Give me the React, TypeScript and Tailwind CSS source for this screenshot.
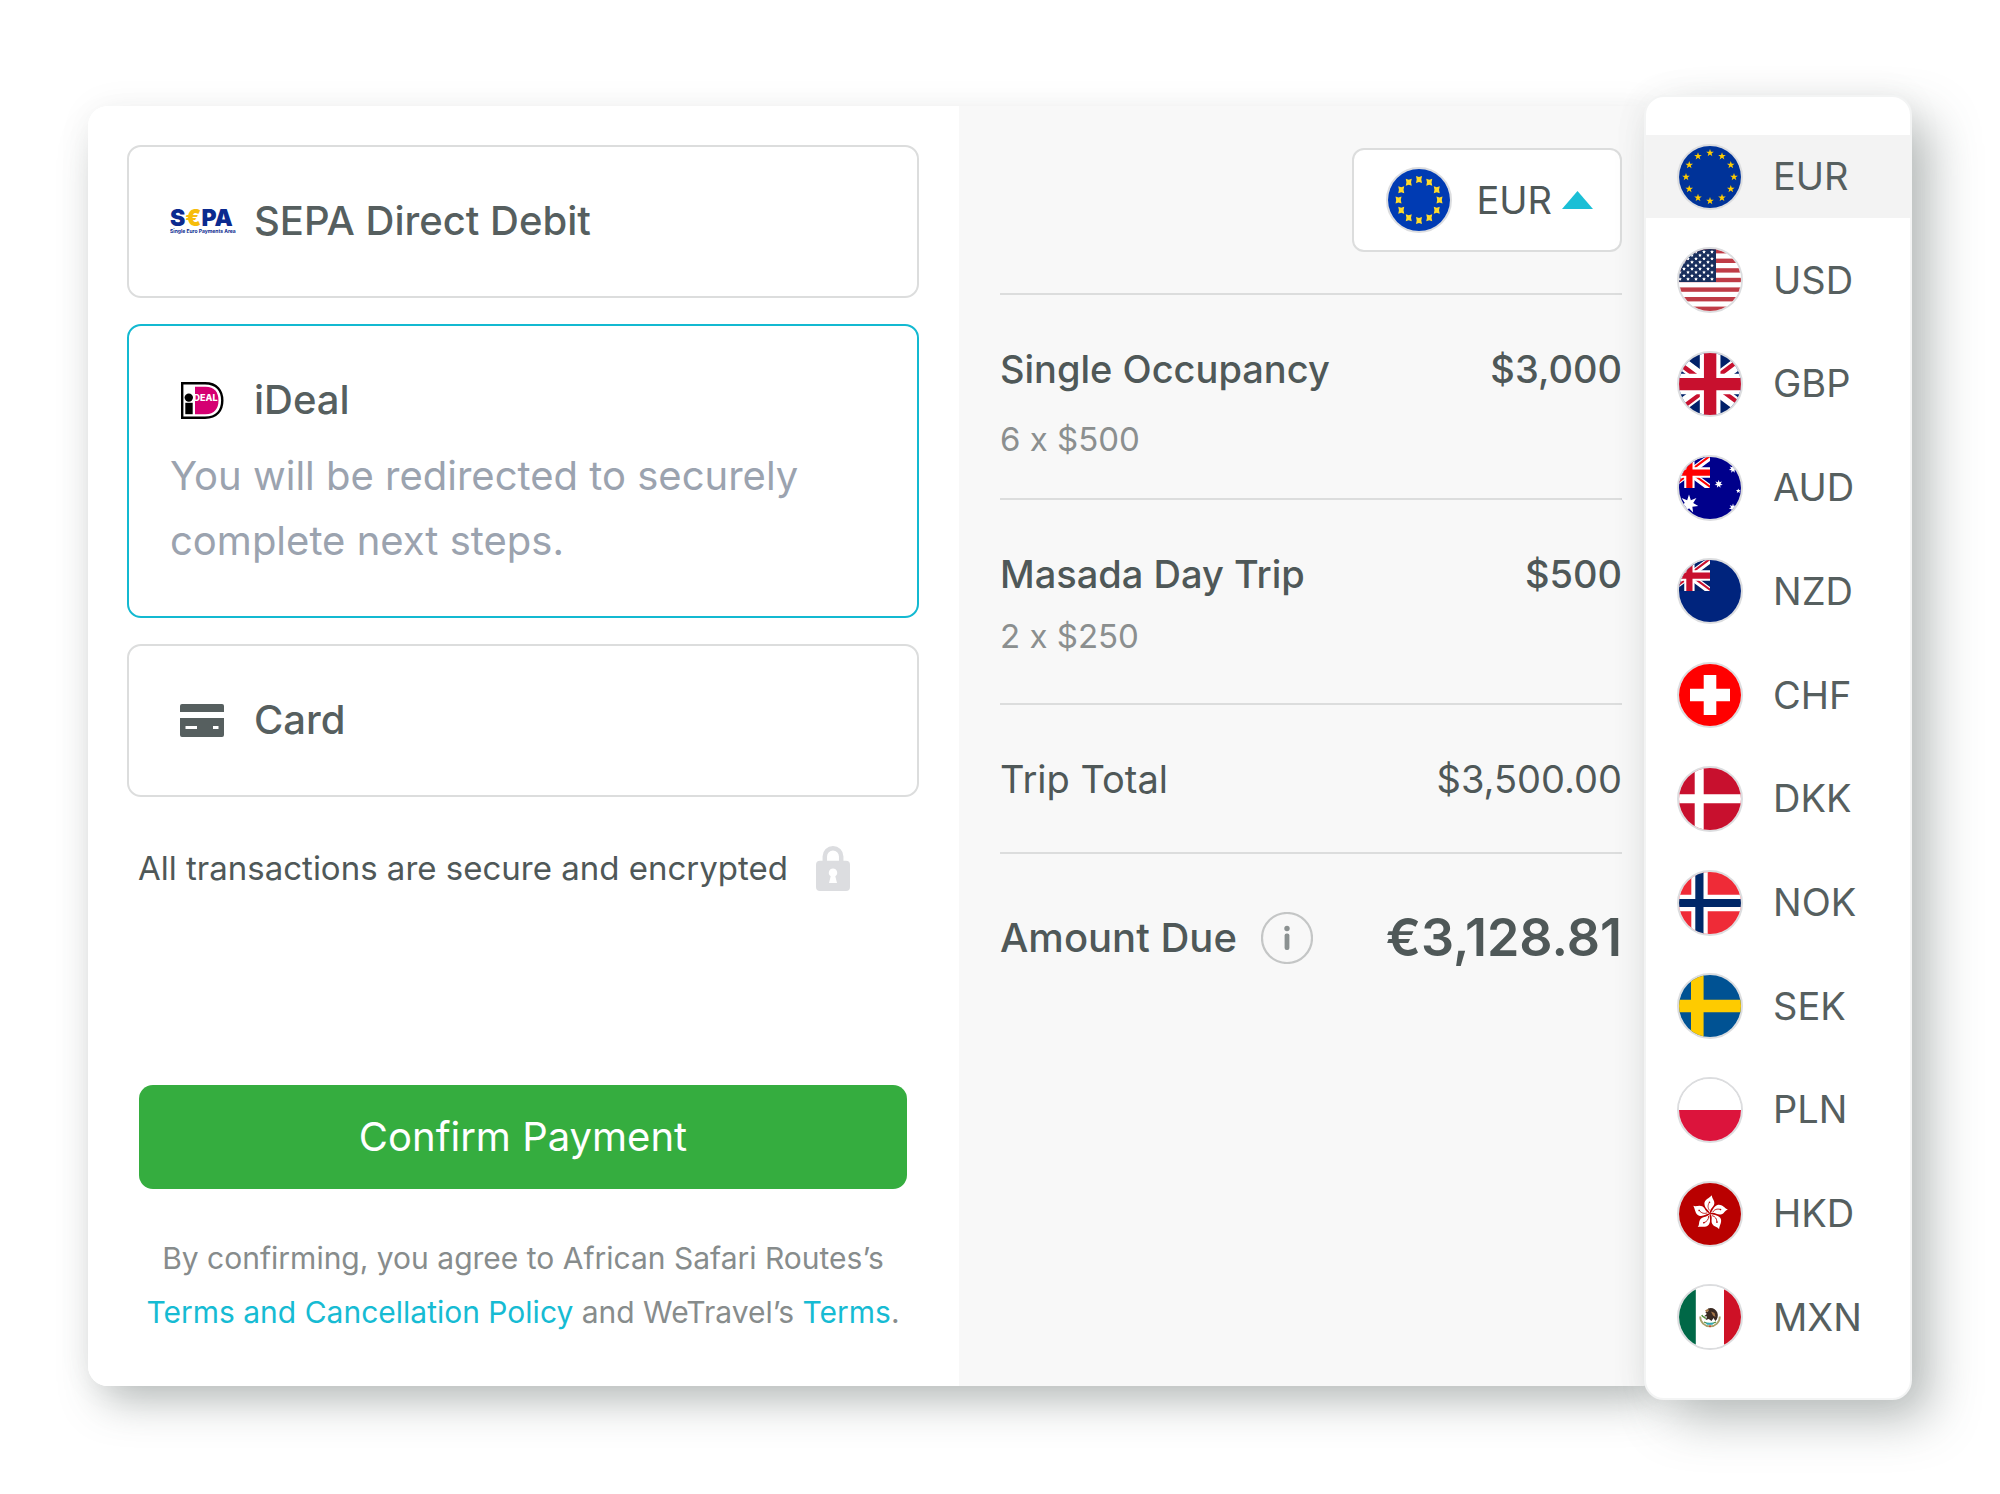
import {useState} from "react";
import type {ReactNode} from "react";

const starPoints = (cx: number, cy: number, outer: number, inner: number, tips: number) =>
    Array.from({length: tips * 2}, (_, i) => {
        const r = i % 2 === 0 ? outer : inner;
        const a = (Math.PI * i) / tips - Math.PI / 2;
        return `${(cx + r * Math.cos(a)).toFixed(2)},${(cy + r * Math.sin(a)).toFixed(2)}`;
    }).join(" ");

const ring = (radius: number) =>
    Array.from({length: 12}, (_, i) => {
        const a = (Math.PI * i) / 6;
        return {x: 31 + radius * Math.sin(a), y: 31 - radius * Math.cos(a)};
    });

const EuFlag = () => (
    <>
        <path fill="#003399" d="M0 0h62v62H0z"/>
        {ring(24).map(({x, y}, i) => (
            <polygon key={i} fill="#ffcc00" points={starPoints(x, y, 4, 1.6, 5)}/>
        ))}
    </>
);

const EuFlagCompact = () => (
    <>
        <path fill="#003bb3" d="M0 0h62v62H0z"/>
        {ring(20.5).map(({x, y}, i) => (
            <path
                key={i}
                fill="#ffda2c"
                transform={`translate(${x} ${y})`}
                d="M-3-3.4L0-2.4 3-3.4 2.300 0 3 3.400 0 2.600-3 3.400-2.300 0z"
            />
        ))}
    </>
);

const UsFlag = () => (
    <>
        <path fill="#fff" d="M0 0h62v62H0z"/>
        {[0, 2, 4, 6, 8, 10, 12].map((row) => (
            <rect key={row} fill="#bf3c46" x="0" y={row * 4.8} width="62" height="4.4"/>
        ))}
        <path fill="#192f5d" d="M0 0h37v33H0z"/>
        {Array.from({length: 9}, (_, row) =>
            (row % 2 === 0 ? [1, 9, 17, 25, 33] : [5, 13, 21, 29]).map((x) => (
                <polygon key={`${row}-${x}`} fill="#fff" points={starPoints(x, 2.9 + row * 3.4, 1.9, 1, 5)}/>
            ))
        )}
    </>
);

const GbFlag = () => (
    <g transform="translate(-10.33 0) scale(.12917)">
        <path fill="#012169" d="M0 0h640v480H0z"/>
        <path fill="#fff" d="m75 0 244 181L562 0h78v62L400 241l240 178v61h-80L320 301 81 480H0v-60l239-178L0 64V0z"/>
        <path fill="#c8102e" d="m424 281 216 159v40L369 281zm-184 20 6 35L54 480H0zM640 0v3L391 191l2-44L590 0zM0 0l239 176h-60L0 42z"/>
        <path fill="#fff" d="M241 0v480h160V0zM0 160v160h640V160z"/>
        <path fill="#c8102e" d="M0 193v96h640v-96zM273 0v480h96V0z"/>
    </g>
);

const Canton = ({blue, red}: {blue: string; red: string}) => (
    <g transform="translate(-10.33 0) scale(.12917)">
        <path fill={blue} d="M0 0h320v240H0z"/>
        <path fill="#fff" d="m37.5 0 122 90.5L281 0h39v31l-120 89.5 120 89V240h-40l-120-89.5L40.5 240H0v-30l119.5-89L0 32V0z"/>
        <path fill={red} d="M212 140.5 320 220v20l-135.5-99.5zm-92 10 3 17.5-96 72H0zM320 0v1.5l-124.5 94 1-22L295 0zM0 0l119.5 88h-30L0 21z"/>
        <path fill="#fff" d="M120.5 0v240h80V0zM0 80v80h320V80z"/>
        <path fill={red} d="M0 96.5v48h320v-48zM136.5 0v240h48V0z"/>
    </g>
);

const AuFlag = () => (
    <>
        <path fill="#00008b" d="M0 0h62v62H0z"/>
        <Canton blue="#00008b" red="#ff0000"/>
        <polygon fill="#fff" points={starPoints(10, 47, 9.5, 4.3, 7)}/>
        <polygon fill="#fff" points={starPoints(39.7, 27, 4.2, 1.9, 7)}/>
        <polygon fill="#fff" points={starPoints(54, 12, 4.2, 1.9, 7)}/>
        <polygon fill="#fff" points={starPoints(59.3, 34, 2.5, 1.1, 5)}/>
        <polygon fill="#fff" points={starPoints(54, 50.7, 4.2, 1.9, 7)}/>
    </>
);

const NzFlag = () => (
    <>
        <path fill="#00247d" d="M0 0h62v62H0z"/>
        <Canton blue="#012169" red="#c8102e"/>
    </>
);

const ChFlag = () => (
    <>
        <path fill="#ff0000" d="M0 0h62v62H0z"/>
        <path fill="#fff" d="M24.7 11h12.6v13.7H51v12.6H37.3V51H24.7V37.3H11V24.7h13.7z"/>
    </>
);

const DkFlag = () => (
    <>
        <path fill="#c8102e" d="M0 0h62v62H0z"/>
        <path fill="#fff" d="M15.7 0h9v62h-9zM0 26.3h62v9H0z"/>
    </>
);

const NoFlag = () => (
    <>
        <path fill="#ef2b37" d="M0 0h62v62H0z"/>
        <path fill="#fff" d="M12.3 0h16.4v62H12.3zM0 22.8h62v16.4H0z"/>
        <path fill="#002868" d="M16.3 0h8.2v62h-8.2zM0 26.9h62v8.2H0z"/>
    </>
);

const SeFlag = () => (
    <>
        <path fill="#005293" d="M0 0h62v62H0z"/>
        <path fill="#fecb00" d="M12 0h12.6v62H12zM0 24.7h62v12.6H0z"/>
    </>
);

const PlFlag = () => (
    <>
        <path fill="#fff" d="M0 0h62v31H0z"/>
        <path fill="#dc143c" d="M0 31h62v31H0z"/>
    </>
);

const HkFlag = () => (
    <>
        <path fill="#b90000" d="M0 0h62v62H0z"/>
        {[0, 72, 144, 216, 288].map((angle) => (
            <g key={angle} transform={`translate(31 30.4) rotate(${angle})`}>
                <path fill="#fff" d="M0-.4C-1.200-3.400-5.400-5-5.600-9.600-5.500-14-1-15 2-18.200 1.400-15.200 4.900-13.400 4.300-9.600 3.800-6.200-.4-4.800 0-.4z"/>
                <path fill="none" stroke="#b90000" strokeWidth=".8" d="M-.4-3C-2.600-5.600-2.200-8.600-.6-11"/>
                <circle cx="-.5" cy="-11.200" r=".8" fill="#b90000"/>
            </g>
        ))}
    </>
);

const MxFlag = () => (
    <>
        <path fill="#fff" d="M0 0h62v62H0z"/>
        <path fill="#006847" d="M0 0h16.8v62H0z"/>
        <path fill="#ce1126" d="M45 0h17v62H45z"/>
        <path fill="none" stroke="#a9a06a" strokeWidth="1.800" d="M21.200 30.500c0 5.800 4.400 9.900 9.800 9.900s9.800-4.100 9.800-9.900"/>
        <path fill="#3a2a22" d="M29 22.500c3.500-1.600 7.800 0 9.300 4 1.200 3.400.3 6.600-2 8.600l-1.800-3-2 3-2.700-2.200-3.200 1.100 1.500-3.400-3-.4 2.700-2.200-1.500-2 2.900-.6z"/>
        <path fill="#a87848" d="M32 25.500l3.500 1.500 1 4-2.500-1.500zM26 24.500l3-1.800 1 1.800-2.500 1.800z"/>
        <path fill="none" stroke="#4f8f3c" strokeWidth="1.400" d="M22.800 29c1 2.800 3 1.500 3.800 3.800M25 36c3.500 2 8.500 2 12 0"/>
        <path fill="#30a7b5" d="M26.500 36.700h8.500l-1.500 2h-5.500z"/>
        <circle cx="31" cy="40.200" r="1" fill="#c8402e"/>
    </>
);

const CURRENCIES: {code: string; flag: ReactNode}[] = [
    {code: "EUR", flag: <EuFlag/>},
    {code: "USD", flag: <UsFlag/>},
    {code: "GBP", flag: <GbFlag/>},
    {code: "AUD", flag: <AuFlag/>},
    {code: "NZD", flag: <NzFlag/>},
    {code: "CHF", flag: <ChFlag/>},
    {code: "DKK", flag: <DkFlag/>},
    {code: "NOK", flag: <NoFlag/>},
    {code: "SEK", flag: <SeFlag/>},
    {code: "PLN", flag: <PlFlag/>},
    {code: "HKD", flag: <HkFlag/>},
    {code: "MXN", flag: <MxFlag/>},
];

const FlagBadge = ({children}: {children: ReactNode}) => (
    <span className="block size-[66px] shrink-0 overflow-hidden rounded-full border-2 border-[#dcdddf]">
        <svg viewBox="0 0 62 62" className="block size-full" aria-hidden="true">{children}</svg>
    </span>
);

const SepaLogo = () => (
    <svg viewBox="0 0 64 28" className="h-7 w-16 overflow-visible" aria-hidden="true">
        <g fontFamily="Inter, sans-serif" fontWeight="900">
            <text x="0" y="19" fontSize="23" fill="#0b2a8f">S<tspan fill="#f7bd0b">€</tspan>PA</text>
            <text x="0" y="26" fontSize="5" fontWeight="700" fill="#0b2a8f">Single Euro Payments Area</text>
        </g>
    </svg>
);

const IdealLogo = () => (
    <svg viewBox="0 0 43 37" className="h-[37px] w-[43px]" aria-hidden="true">
        <path fill="#fff" stroke="#000" strokeWidth="2.400" d="M1.200 1.200H24c12 0 17.300 7.600 17.300 17.300S36 35.800 24 35.800H1.200z"/>
        <path fill="#d50072" d="M14 4.800h10.500C33.500 4.800 37.500 10.500 37.500 18.500S33.500 32.200 24.500 32.200H14z"/>
        <circle cx="7.800" cy="15.600" r="4.200"/>
        <path d="M4.300 20.800h7.400v11.400H4.300z"/>
        <text x="12.500" y="19.300" fontFamily="Inter, sans-serif" fontWeight="800" fontSize="9" fill="#fff">DEAL</text>
    </svg>
);

const CardIcon = () => (
    <svg viewBox="0 0 44 33" className="h-[33px] w-11" aria-hidden="true">
        <path fill="#565f5f" d="M2 0h40a2 2 0 0 1 2 2v6H0V2a2 2 0 0 1 2-2z"/>
        <path fill="#565f5f" fillRule="evenodd" d="M0 14h44v17a2 2 0 0 1-2 2H2a2 2 0 0 1-2-2zm5.500 8v3H17v-3zm27.500 0v3h5.500v-3z"/>
    </svg>
);

const LockIcon = () => (
    <svg viewBox="0 0 34 45" className="h-[45px] w-[34px]" aria-hidden="true">
        <path fill="none" stroke="#dcdde0" strokeWidth="4.500" d="M8.800 17v-6.500a8.200 8.200 0 0 1 16.400 0V17"/>
        <path
            fill="#dcdde0"
            fillRule="evenodd"
            d="M4 14.700h26a4 4 0 0 1 4 4V41a4 4 0 0 1-4 4H4a4 4 0 0 1-4-4V18.700a4 4 0 0 1 4-4zM17 22.500a4.200 4.200 0 0 0-2.300 7.700L13 37h8l-1.700-6.800A4.200 4.200 0 0 0 17 22.500z"
        />
    </svg>
);

const METHODS = [
    {id: "sepa", name: "SEPA Direct Debit", logo: <SepaLogo/>, note: ""},
    {id: "ideal", name: "iDeal", logo: <IdealLogo/>, note: "You will be redirected to securely complete next steps."},
    {id: "card", name: "Card", logo: <CardIcon/>, note: ""},
];

const PaymentMethods = () => {
    const [selected, setSelected] = useState("ideal");

    return (
        <div className="flex flex-col gap-[26px]">
            {METHODS.map(({id, name, logo, note}) => (
                <button
                    key={id}
                    type="button"
                    aria-pressed={selected === id}
                    onClick={() => setSelected(id)}
                    className={`rounded-[14px] border-2 px-[41px] pt-[50px] text-left ${note ? "pb-[43px]" : "pb-[51px]"} ${selected === id ? "border-[#13b9d1]" : "border-[#dcdddd]"}`}
                >
                    <span className="flex h-12 items-center gap-5">
                        <span className="flex w-16 justify-center">{logo}</span>
                        <span className="text-[40px] leading-12 font-medium text-[#565f5f]">{name}</span>
                    </span>
                    {note && (
                        <span className="mt-[19px] block text-[40px] leading-[65px] text-[#9ba3af]">{note}</span>
                    )}
                </button>
            ))}
        </div>
    );
};

const LineItem = ({name, price, detail, detailClass}: {name: string; price: string; detail: string; detailClass: string}) => (
    <div className="border-b-2 border-[#dcdddd] pt-[50px]">
        <div className="flex h-12 items-center justify-between text-[38px] font-medium">
            <span>{name}</span>
            <span>{price}</span>
        </div>
        <p className={`text-[33px] leading-10 text-[#8b8f8f] ${detailClass}`}>{detail}</p>
    </div>
);

const Summary = ({currency}: {currency: string}) => (
    <section className="rounded-r-[20px] bg-[#f8f8f8] pt-[42px] pr-[38px] pl-[41px] text-[#4f5858]">
        <div className="flex justify-end border-b-2 border-[#dcdddd] pb-[41px]">
            <button
                type="button"
                aria-haspopup="listbox"
                aria-expanded="true"
                className="flex h-[104px] items-center rounded-[12px] border-2 border-[#dcdddd] bg-white pr-[27px] pl-8"
            >
                <FlagBadge><EuFlagCompact/></FlagBadge>
                <span className="ml-6 text-[38px]">{currency}</span>
                <svg viewBox="0 0 31 18" className="ml-2.5 h-[18px] w-[31px]" aria-hidden="true">
                    <path fill="#1bbfd6" d="M15.500 0L31 18H0z"/>
                </svg>
            </button>
        </div>
        <LineItem name="Single Occupancy" price="$3,000" detail="6 x $500" detailClass="mt-[26px] mb-[39px]"/>
        <LineItem name="Masada Day Trip" price="$500" detail="2 x $250" detailClass="mt-[18px] mb-[47px]"/>
        <div className="border-b-2 border-[#dcdddd] pt-[50px] pb-[49px]">
            <div className="flex h-12 items-center justify-between text-[38px]">
                <span>Trip Total</span>
                <span>$3,500.00</span>
            </div>
        </div>
        <div className="flex items-center justify-between pt-[57px]">
            <div className="flex items-center gap-6">
                <span className="text-[40px] leading-[54px] font-medium">Amount Due</span>
                <button type="button" aria-label="About the amount due">
                    <svg viewBox="0 0 52 52" className="size-[52px]" aria-hidden="true">
                        <circle cx="26" cy="26" r="25" fill="none" stroke="#c4c6c6" strokeWidth="2.200"/>
                        <circle cx="26" cy="16.500" r="2.700" fill="#8b9191"/>
                        <rect x="23.600" y="21.500" width="4.800" height="16.500" rx="2" fill="#8b9191"/>
                    </svg>
                </button>
            </div>
            <span className="text-[52px] leading-[54px] font-semibold">€3,128.81</span>
        </div>
    </section>
);

const CurrencyMenu = ({current, onSelect}: {current: string; onSelect: (code: string) => void}) => (
    <ul className="absolute -top-[11px] right-0 -bottom-[14px] flex w-[268px] flex-col justify-between rounded-[20px] border-2 border-[#f3f4f4] bg-white pt-[38px] pb-[39px] shadow-[22px_22px_50px_-4px_rgba(75,88,85,0.4),0_0_36px_rgba(0,0,0,0.05)]">
        {CURRENCIES.map(({code, flag}) => (
            <li key={code}>
                <button
                    type="button"
                    onClick={() => onSelect(code)}
                    className={`flex h-[83px] w-full items-center gap-[30px] pl-[31px] text-[38px] text-[#565f5f] ${code === current ? "bg-[#f3f3f3]" : ""}`}
                >
                    <FlagBadge>{flag}</FlagBadge>
                    {code}
                </button>
            </li>
        ))}
    </ul>
);

const App = () => {
    const [currency, setCurrency] = useState("EUR");

    return (
        <main className="bg-white px-[88px] pt-[106px] pb-[108px] font-['Inter',sans-serif]">
            <div className="relative pr-[252px]">
                <div className="grid grid-cols-[871fr_701fr] rounded-[20px] shadow-[6px_24px_44px_-10px_rgba(75,88,85,0.4),0_0_36px_rgba(0,0,0,0.05)]">
                    <section className="rounded-l-[20px] bg-white pt-[39px] pr-10 pb-[47px] pl-[39px]">
                        <PaymentMethods/>
                        <div className="mt-[49px] flex h-[45px] items-center gap-7 pl-[11px]">
                            <p className="text-[33px] text-[#4f5858]">All transactions are secure and encrypted</p>
                            <LockIcon/>
                        </div>
                        <div className="mt-[194px] px-3">
                            <button type="button" className="h-[104px] w-full rounded-[14px] bg-[#35ad3f] text-[40px] text-white">
                                Confirm Payment
                            </button>
                        </div>
                        <p className="mt-[42px] text-center text-[30px] leading-[54px] text-[#878c8c]">
                            By confirming, you agree to African Safari Routes’s
                            <br/>
                            <a href="#policy" className="text-[#16bbd3]">Terms and Cancellation Policy</a> and WeTravel’s{" "}
                            <a href="#terms" className="text-[#16bbd3]">Terms</a>.
                        </p>
                    </section>
                    <Summary currency={currency}/>
                </div>
                <CurrencyMenu current={currency} onSelect={setCurrency}/>
            </div>
        </main>
    );
};

export default App;
